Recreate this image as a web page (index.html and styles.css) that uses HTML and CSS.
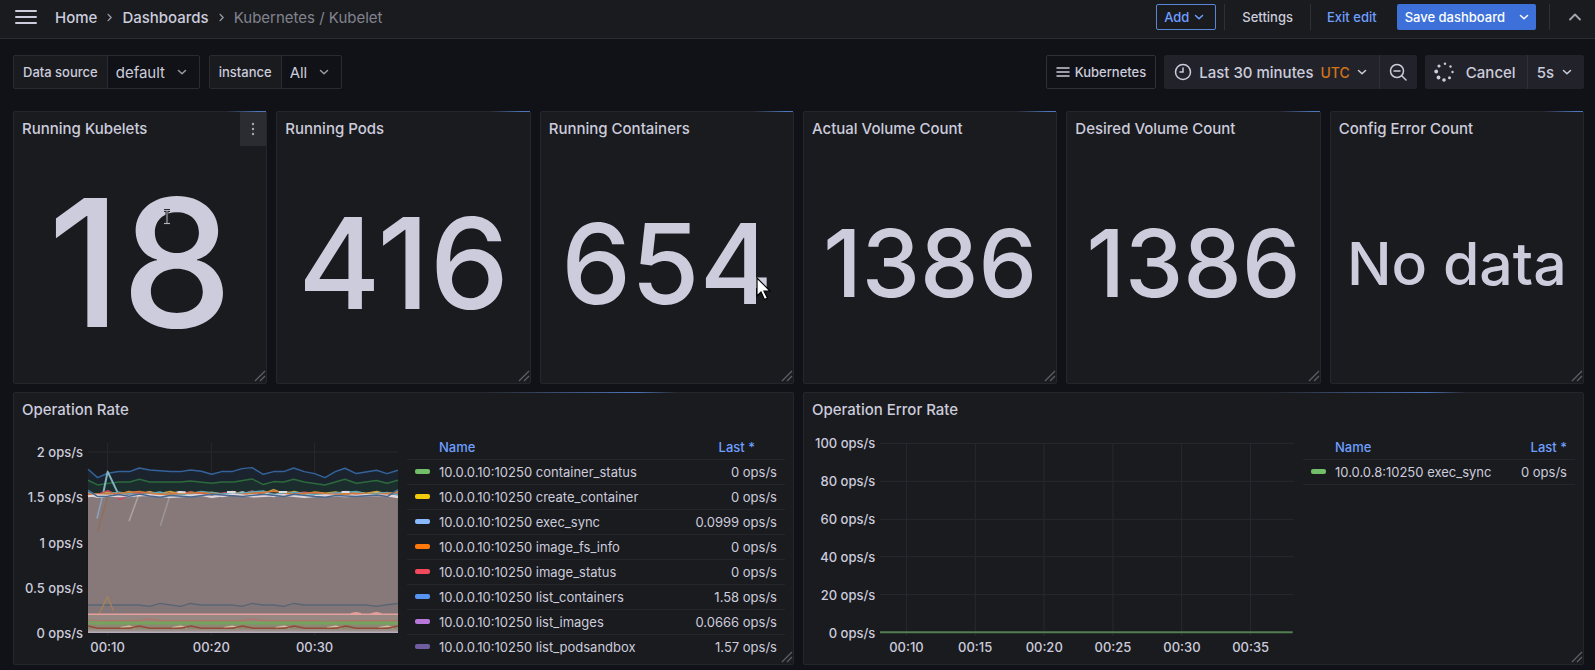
FILE: index.html
```html
<!DOCTYPE html>
<html lang="en">
<head>
<meta charset="utf-8">
<title>Kubernetes / Kubelet - Dashboards</title>
<link rel="stylesheet" href="styles.css">
</head>
<body>
<svg class="defs" aria-hidden="true">
  <symbol id="down" viewBox="0 0 10 10"><path d="M1.500 3.500 5 6.800 8.500 3.500" fill="none" stroke="currentColor" stroke-width="1.500" stroke-linecap="round" stroke-linejoin="round"/></symbol>
  <symbol id="right" viewBox="0 0 10 10"><path d="M3.500 1.500 6.800 5 3.500 8.500" fill="none" stroke="currentColor" stroke-width="1.500" stroke-linecap="round" stroke-linejoin="round"/></symbol>
  <symbol id="grip" viewBox="0 0 12 12"><path d="M1 11 11 1M6 11l5-5" fill="none" stroke="currentColor" stroke-width="1.300"/></symbol>
</svg>

<header class="topbar">
  <button class="icon-btn menu" aria-label="Open menu">
    <svg width="22" height="16" viewBox="0 0 22 16"><path d="M1 2h20M1 8h20M1 14h20" stroke="currentColor" stroke-width="2" stroke-linecap="round"/></svg>
  </button>
  <nav class="crumbs" aria-label="Breadcrumbs">
    <a href="#home">Home</a>
    <svg class="chev"><use href="#right"/></svg>
    <a href="#dashboards">Dashboards</a>
    <svg class="chev"><use href="#right"/></svg>
    <span class="current">Kubernetes / Kubelet</span>
  </nav>
  <div class="actions">
    <button class="btn outline">Add <svg class="chev"><use href="#down"/></svg></button>
    <span class="sep"></span>
    <button class="btn text">Settings</button>
    <span class="sep"></span>
    <button class="btn text link">Exit edit</button>
    <div class="save">
      <button class="btn primary">Save dashboard</button>
      <button class="btn primary caret" aria-label="Save options"><svg class="chev"><use href="#down"/></svg></button>
    </div>
    <span class="sep"></span>
    <button class="icon-btn" aria-label="Collapse toolbar">
      <svg width="14" height="14" viewBox="0 0 14 14"><path d="M2 9.500 7 4.500l5 5" fill="none" stroke="currentColor" stroke-width="1.800" stroke-linecap="round" stroke-linejoin="round"/></svg>
    </button>
  </div>
</header>

<main>
  <div class="controls">
    <div class="variable">
      <label for="var-datasource">Data source</label>
      <div class="select"><select id="var-datasource"><option>default</option></select><svg class="chev"><use href="#down"/></svg></div>
    </div>
    <div class="variable">
      <label for="var-instance">instance</label>
      <div class="select"><select id="var-instance"><option>All</option></select><svg class="chev"><use href="#down"/></svg></div>
    </div>
    <div class="tools">
      <button class="tool dash-links">
        <svg width="14" height="12" viewBox="0 0 14 12"><path d="M1 2h12M1 6h12M1 10h12" stroke="currentColor" stroke-width="1.500" stroke-linecap="round"/></svg>
        Kubernetes
      </button>
      <div class="group">
        <button class="tool time">
          <svg width="18" height="18" viewBox="0 0 18 18" fill="none" stroke="currentColor" stroke-width="1.500" stroke-linecap="round"><circle cx="9" cy="9" r="7.500"/><path d="M9 5v4H6"/></svg>
          <span>Last 30 minutes</span><span class="utc">UTC</span><svg class="chev"><use href="#down"/></svg>
        </button>
        <button class="tool zoom" aria-label="Zoom out time range">
          <svg width="18" height="18" viewBox="0 0 18 18" fill="none" stroke="currentColor" stroke-width="1.500" stroke-linecap="round"><circle cx="8" cy="8" r="6.500"/><path d="M5 8h6M13 13l4 4"/></svg>
        </button>
      </div>
      <div class="group">
        <button class="tool cancel">
          <svg width="20" height="20" viewBox="0 0 20 20" fill="currentColor"><circle cx="11" cy="1.800" r="1.200"/><circle cx="16.500" cy="4.500" r="1.200"/><circle cx="18.500" cy="10" r="1.200"/><circle cx="15.500" cy="15.800" r="1.500"/><circle cx="10" cy="18" r="1.800"/><circle cx="4.500" cy="15.500" r="1.900"/><circle cx="2.200" cy="9.500" r="1.900"/><circle cx="5" cy="4" r="1.600"/></svg>
          Cancel
        </button>
        <button class="tool rate">5s <svg class="chev"><use href="#down"/></svg></button>
      </div>
    </div>
  </div>

  <div class="grid">
    <section class="panel">
      <h2>Running Kubelets</h2>
      <button class="panel-menu" aria-label="Panel menu"><svg width="4" height="14" viewBox="0 0 4 14" fill="currentColor"><circle cx="2" cy="2" r="1.200"/><circle cx="2" cy="7" r="1.200"/><circle cx="2" cy="12" r="1.200"/></svg></button>
      <div class="stat s2">18</div>
      <svg class="ibeam" viewBox="0 0 8 16" fill="none"><path d="M1 1.500h6M1 14.500h6M4 2v12" stroke="#26262b" stroke-width="3"/><path d="M1 1.500h6M1 14.500h6M4 2v12" stroke="#b4b4be"/></svg>
      <svg class="grip"><use href="#grip"/></svg>
    </section>
    <section class="panel">
      <h2>Running Pods</h2>
      <div class="stat s3">416</div>
      <svg class="grip"><use href="#grip"/></svg>
    </section>
    <section class="panel">
      <h2>Running Containers</h2>
      <div class="stat s3 wide">654</div>
      <svg class="pointer" viewBox="0 0 16 24"><path d="M1 1v18l4-4 3.500 7.500 3-1.500L8 14h6z" fill="#fff" stroke="#000" stroke-width="1.200"/></svg>
      <svg class="grip"><use href="#grip"/></svg>
    </section>
    <section class="panel">
      <h2>Actual Volume Count</h2>
      <div class="stat s4">1386</div>
      <svg class="grip"><use href="#grip"/></svg>
    </section>
    <section class="panel">
      <h2>Desired Volume Count</h2>
      <div class="stat s4">1386</div>
      <svg class="grip"><use href="#grip"/></svg>
    </section>
    <section class="panel">
      <h2>Config Error Count</h2>
      <div class="stat none">No data</div>
      <svg class="grip"><use href="#grip"/></svg>
    </section>

    <section class="panel graph">
      <h2>Operation Rate</h2>
      <div class="viz">
        <div class="chart rate-chart">
          <div class="yaxis"><span>2 ops/s</span><span>1.5 ops/s</span><span>1 ops/s</span><span>0.5 ops/s</span><span>0 ops/s</span></div>
          <svg class="plot" viewBox="263 176 930 571" preserveAspectRatio="none" role="img" aria-label="Operation rate by series">
            <g class="gridlines"><path d="M263 203H1193M322 176V755M633 176V755M943 176V755"/></g>
            <path fill="#1b242e" d="M263 255 292 280 322 267 355 262 388 262 417 251 448 257 510 262 541 262 570 257 603 261 634 270 664 262 695 262 725 253 755 250 789 270 820 262 850 262 880 251 912 262 943 268 974 280 1005 262 1034 252 1068 268 1129 258 1160 268 1193 258V747H263Z"/>
            <path fill="#1c2d2d" d="M263 288 292 302 322 298 355 293 388 293 417 285 448 293 541 293 570 290 634 297 664 293 700 293 755 284 789 301 820 292 850 293 880 285 912 293 974 302 1005 293 1034 285 1068 297 1129 289 1160 297 1193 288V747H263Z"/>
            <path fill="#87797a" d="M263 328H1193V747H263Z"/>
            <path fill="#837678" d="M263 663H1193V747H263Z"/>
            <path fill="#978782" d="M263 692H1193V747H263Z"/>
            <path fill="#8d8873" d="M263 716H1193V747H263Z"/>
            <path fill="#9c918a" d="M263 736H1193V747H263Z"/>
            <g class="lines">
              <path stroke="#34629b" d="M263 255 292 280 322 267 355 262 388 262 417 251 448 257 510 262 541 262 570 257 603 261 634 270 664 262 695 262 725 253 755 250 789 270 820 262 850 262 880 251 912 262 943 268 974 280 1005 262 1034 252 1068 268 1129 258 1160 268 1193 258"/>
              <path stroke="#2c6a3c" d="M263 288 292 302 322 298 355 293 388 293 417 285 448 293 541 293 570 290 634 297 664 293 700 293 755 284 789 301 820 292 850 293 880 285 912 293 974 302 1005 293 1034 285 1068 297 1129 289 1160 297 1193 288"/>
              <path stroke="#8ba4bb" d="M290 403 309 325"/><path stroke="#8e705c" d="M292 440 322 340"/>
              <path stroke="#aba39e" d="M386 411 415 332"/><path stroke="#9c9795" d="M480 425 508 336"/>
              <path class="thick" stroke="#7fb4bd" d="M309 325 322 262 352 325"/>
              <path class="thick" stroke="#d9dce2" d="M263 331 292 338 355 331 386 336 448 324 479 333 541 323 572 334 634 329 665 336 727 324 758 333 789 324 820 336 851 323 913 334 944 328 975 336 1037 324 1068 334 1130 325 1161 333 1193 337"/>
              <path stroke="#d5a33d" d="M263 326 292 330 322 324 355 331 386 322 417 329 448 323 479 328 510 322 541 330 572 323 603 330 634 324 665 329 696 322 727 329 758 322 789 328 820 316 851 328 882 322 913 329 944 323 975 327 1006 323 1037 329 1068 323 1099 327 1130 322 1161 330 1193 322"/>
              <path stroke="#c64a62" d="M263 330 292 331 322 319 340 327 357 346 372 340 386 330 417 324 448 331 510 329 572 324 634 331 696 323 727 331 755 320 789 332 851 330 913 324 975 332 1037 322 1068 330 1130 332 1193 326"/>
              <path stroke="#5baabc" d="M263 322 292 334 355 324 417 332 479 323 510 332 572 328 603 322 665 329 727 326 789 320 820 331 882 325 944 331 1006 326 1068 322 1099 330 1161 325 1193 331"/>
              <path stroke="#d27a3c" d="M263 332 355 327 417 322 479 331 541 328 603 325 665 332 727 330 820 321 882 330 944 325 1006 331 1068 328 1130 331 1193 324"/>
              <path class="thick" stroke="#e0d7dd" d="M263 336 292 333 355 336 448 332 510 338 603 332 634 338 696 330 758 337 851 332 913 338 975 333 1037 336 1099 332 1161 334 1193 339"/>
              <path class="thick" stroke="#dcdce4" d="M532 324H556M680 323H706M836 323H860M1024 323H1048"/>
              <path stroke="#486890" d="M263 318 292 337 322 336 355 331 386 336 417 329 448 335 479 339 510 334 572 338 634 330 665 332 727 337 789 330 851 337 882 330 944 337 975 339 1006 334 1068 337 1130 332 1161 337 1193 316"/>
              <path stroke="#596574" d="M263 663 415 663 448 667 480 658 541 667 570 658 603 663 695 663 725 667 755 658 789 663 820 663 850 667 880 658 912 663 1098 663 1129 667 1160 662 1193 658"/>
              <path stroke="#a3815d" d="M296 690 322 638 339 680"/>
              <path stroke="#e5a09b" d="M263 691H1193M1052 689l15-3 15 3M1113 689l15-3 15 3"/>
              <path stroke="#ae7568" d="M263 709 292 712 322 710 415 710 448 706 480 710 725 710 755 706 789 710 943 710 974 713 1005 710H1193"/>
              <path stroke="#74a45e" d="M263 712 292 715H1193M263 719H1193"/>
              <path stroke="#d4bfa2" d="M360 731 386 727 404 731M515 731 541 727 560 731M670 731 696 727 714 731M825 731 851 727 869 731M980 731 1006 727 1024 731M1135 731 1161 727 1179 731"/>
              <path stroke="#934b39" d="M263 726 292 733H386L417 726 448 733H541L572 726 603 733H696L727 726 758 733H851L882 726 913 733H1006L1037 726 1068 733H1161L1193 726"/>
              <path stroke="#b6acbc" d="M263 745H1193"/>
            </g>
          </svg>
          <svg class="xaxis"><text x="6.3%" y="14">00:10</text><text x="39.8%" y="14">00:20</text><text x="73.1%" y="14">00:30</text></svg>
        </div>
        <table class="legend roomy">
          <thead><tr><th></th><th class="name">Name</th><th class="val">Last *</th></tr></thead>
          <tbody>
            <tr><td><i class="green"></i></td><td>10.0.0.10:10250 container_status</td><td class="val">0 ops/s</td></tr>
            <tr><td><i class="yellow"></i></td><td>10.0.0.10:10250 create_container</td><td class="val">0 ops/s</td></tr>
            <tr><td><i class="sky"></i></td><td>10.0.0.10:10250 exec_sync</td><td class="val">0.0999 ops/s</td></tr>
            <tr><td><i class="orange"></i></td><td>10.0.0.10:10250 image_fs_info</td><td class="val">0 ops/s</td></tr>
            <tr><td><i class="red"></i></td><td>10.0.0.10:10250 image_status</td><td class="val">0 ops/s</td></tr>
            <tr><td><i class="blue"></i></td><td>10.0.0.10:10250 list_containers</td><td class="val">1.58 ops/s</td></tr>
            <tr><td><i class="purple"></i></td><td>10.0.0.10:10250 list_images</td><td class="val">0.0666 ops/s</td></tr>
            <tr><td><i class="violet"></i></td><td>10.0.0.10:10250 list_podsandbox</td><td class="val">1.57 ops/s</td></tr>
          </tbody>
        </table>
      </div>
      <svg class="grip"><use href="#grip"/></svg>
    </section>

    <section class="panel graph">
      <h2>Operation Error Rate</h2>
      <div class="viz">
        <div class="chart error-chart">
          <div class="yaxis"><span>100 ops/s</span><span>80 ops/s</span><span>60 ops/s</span><span>40 ops/s</span><span>20 ops/s</span><span>0 ops/s</span></div>
          <svg class="plot" viewBox="0 0 1245 570" preserveAspectRatio="none" role="img" aria-label="Operation error rate, flat at zero">
            <g class="gridlines"><path d="M0 1H1245M0 115H1245M0 229H1245M0 341H1245M0 455H1245M80 0V579M287 0V579M494 0V579M701 0V579M908 0V579M1115 0V579"/></g>
            <g class="lines"><path class="thick" stroke="#527f50" d="M0 568H1242"/></g>
          </svg>
          <svg class="xaxis"><text x="6.4%" y="14">00:10</text><text x="23%" y="14">00:15</text><text x="39.7%" y="14">00:20</text><text x="56.3%" y="14">00:25</text><text x="73%" y="14">00:30</text><text x="89.6%" y="14">00:35</text></svg>
        </div>
        <table class="legend">
          <thead><tr><th></th><th class="name">Name</th><th class="val">Last *</th></tr></thead>
          <tbody><tr><td><i class="green"></i></td><td>10.0.0.8:10250 exec_sync</td><td class="val">0 ops/s</td></tr></tbody>
        </table>
      </div>
      <svg class="grip"><use href="#grip"/></svg>
    </section>
  </div>
</main>
</body>
</html>
```
FILE: styles.css
```css
* { box-sizing: border-box; }

body {
  margin: 0;
  background: #111217;
  color: #ccccdc;
  font-family: Inter, "Liberation Sans", sans-serif;
  font-size: 15px;
}

button, select { font: inherit; color: inherit; background: none; border: 0; padding: 0; margin: 0; }
svg { flex: none; }
.defs { position: absolute; width: 0; height: 0; }
.chev { width: 10px; height: 10px; }

/* top bar */
.topbar {
  display: flex;
  align-items: center;
  height: 39px;
  padding: 0 13px 4px 15px;
  background: #1a1b1f;
  border-bottom: 1px solid #2a2b30;
}
.icon-btn { display: flex; color: #a5a5b2; }
.menu { color: #ccccdc; }
.crumbs { display: flex; align-items: center; gap: 8px; margin-left: 18px; font-weight: 500; }
.crumbs a { color: #ccccdc; text-decoration: none; }
.crumbs .chev { width: 9px; height: 9px; color: #9a9aa6; }
.crumbs .current { color: #82838e; font-weight: 400; }

.actions { display: flex; align-items: center; margin-left: auto; font-size: 13px; font-weight: 500; }
.btn { display: flex; align-items: center; height: 26px; border-radius: 2px; }
.outline { gap: 5px; padding: 0 11px 0 7px; border: 1px solid #5a86d8; color: #6e9fff; }
.sep { width: 1px; height: 26px; margin: 0 8px; background: #2f3035; }
.text { padding: 0 9px; }
.link { color: #6e9fff; padding: 0 20px 0 8px; }
.save { display: flex; margin-right: 5px; }
.primary { background: #3d71d9; color: #fff; padding: 0 8px; border-radius: 2px 0 0 2px; }
.caret { border-radius: 0 2px 2px 0; padding: 0 7px 0 6px; }
.actions .sep:last-of-type { margin-right: 18px; }

/* variables and time controls */
main { padding: 16px 11px 4px 13px; }
.controls { display: flex; gap: 9px; margin-bottom: 22px; }
.variable { display: flex; height: 34px; border: 1px solid #2a2b31; border-radius: 2px; }
.variable label {
  display: flex;
  align-items: center;
  padding: 0 9px;
  background: #1a1b1f;
  border-right: 1px solid #2a2b31;
  font-size: 13px;
  font-weight: 500;
}
.select { display: grid; align-items: center; }
.select > * { grid-area: 1 / 1; }
.select select { appearance: none; height: 32px; padding: 0 33px 0 8px; }
.select .chev { justify-self: end; margin-right: 12px; color: #9a9aa6; pointer-events: none; }

.tools { display: flex; gap: 8px; margin-left: auto; }
.tool { display: flex; align-items: center; height: 34px; font-weight: 500; }
.dash-links { gap: 5px; padding: 0 9px; border: 1px solid #303137; border-radius: 2px; font-size: 13px; }
.group { display: flex; background: #22232a; border-radius: 2px; }
.time { gap: 7px; padding: 0 12px 0 10px; }
.time .utc { color: #d0731c; font-size: 14px; }
.zoom { padding: 0 10px 0 9px; border-left: 1px solid #2f3037; }
.cancel { gap: 12px; padding: 0 11px 0 9px; }
.rate { gap: 8px; padding: 0 12px 0 9px; border-left: 1px solid #2f3037; }

/* panels */
.grid {
  display: grid;
  grid-template-columns: repeat(6, minmax(0, 1fr));
  grid-auto-rows: minmax(273px, auto);
  gap: 8px 9px;
}
.panel {
  position: relative;
  display: flex;
  flex-direction: column;
  min-width: 0;
  background: #1a1b1f;
  border: 1px solid #25262b;
  border-radius: 2px;
}
.panel::before {
  content: "";
  position: absolute;
  top: -1px;
  left: 0;
  right: 0;
  height: 1px;
  background: linear-gradient(90deg, #5a84cc00 84%, #4f74b8 97%);
}
.panel h2 { margin: 0; padding: 0 8px; font-size: 15px; line-height: 34px; font-weight: 500; }
.panel-menu {
  position: absolute;
  top: 0;
  right: 0;
  display: flex;
  align-items: center;
  justify-content: center;
  width: 26px;
  height: 34px;
  background: #2b2c31;
  color: #a5a5b2;
}
.stat { flex: 1; display: flex; align-items: center; justify-content: center; padding-bottom: 3px; font-weight: 500; line-height: 1; white-space: nowrap; }
.s2 { font-size: 177px; }
.s3 { font-size: 126px; }
.s3.wide { font-size: 111px; }
.s4 { font-size: 93px; }
.none { font-size: 59px; }
.grip { position: absolute; right: 0; bottom: 1px; width: 12px; height: 12px; color: #5d5e66; }
.ibeam { position: absolute; left: 149px; top: 97px; width: 8px; height: 16px; }
.pointer { position: absolute; left: 215px; top: 165px; width: 16px; height: 24px; }

/* time series */
.graph { grid-column: span 3; }
.graph::before { background: linear-gradient(90deg, #5a84cc00 60%, #4f74b8 80%, #5a84cc00 85%); }
.viz { flex: 1; display: flex; padding: 8px 8px 0; gap: 9px; }
.chart { flex: 1; display: grid; grid-template-columns: auto minmax(0, 1fr); grid-template-rows: 190px auto; min-width: 0; margin-top: 8px; font-size: 13px; font-weight: 500; }
.yaxis { display: flex; flex-direction: column; justify-content: space-between; margin: -9px 5px -9px 0; padding-left: 3px; line-height: 18px; text-align: right; }
.rate-chart .yaxis { margin-top: 0; }
.plot { width: 100%; height: 190px; overflow: visible; }
.gridlines path { fill: none; stroke: #28292e; stroke-width: 1; vector-effect: non-scaling-stroke; }
.lines path { fill: none; stroke-width: 1.5; stroke-linejoin: round; vector-effect: non-scaling-stroke; }
.lines .thick { stroke-width: 2; }
.xaxis { grid-column: 2; width: 100%; height: 18px; margin-top: 5px; overflow: visible; fill: currentColor; }
.xaxis text { text-anchor: middle; }

.legend { align-self: flex-start; border-collapse: collapse; font-size: 13px; width: 272px; }
.legend.roomy { width: 378px; }
.legend th, .legend td { height: 25px; padding: 0; text-align: left; font-weight: 400; white-space: nowrap; border-bottom: 1px solid #25262b; }
.legend th { height: 24px; color: #6e9fff; font-weight: 500; }
.legend th:first-child { width: 32px; }
.legend tr > .val { text-align: right; padding-right: 8px; }
.legend.roomy th.val { padding-right: 30px; }
.legend.roomy tbody tr:last-child td { border-bottom: 0; }
.legend i { display: block; width: 15px; height: 5px; margin-left: 8px; border-radius: 2px; }
.green { background: #73bf69; }
.yellow { background: #f2cc0c; }
.sky { background: #8ab8ff; }
.orange { background: #ff780a; }
.red { background: #f2495c; }
.blue { background: #5794f2; }
.purple { background: #b877d9; }
.violet { background: #705da0; }
```
